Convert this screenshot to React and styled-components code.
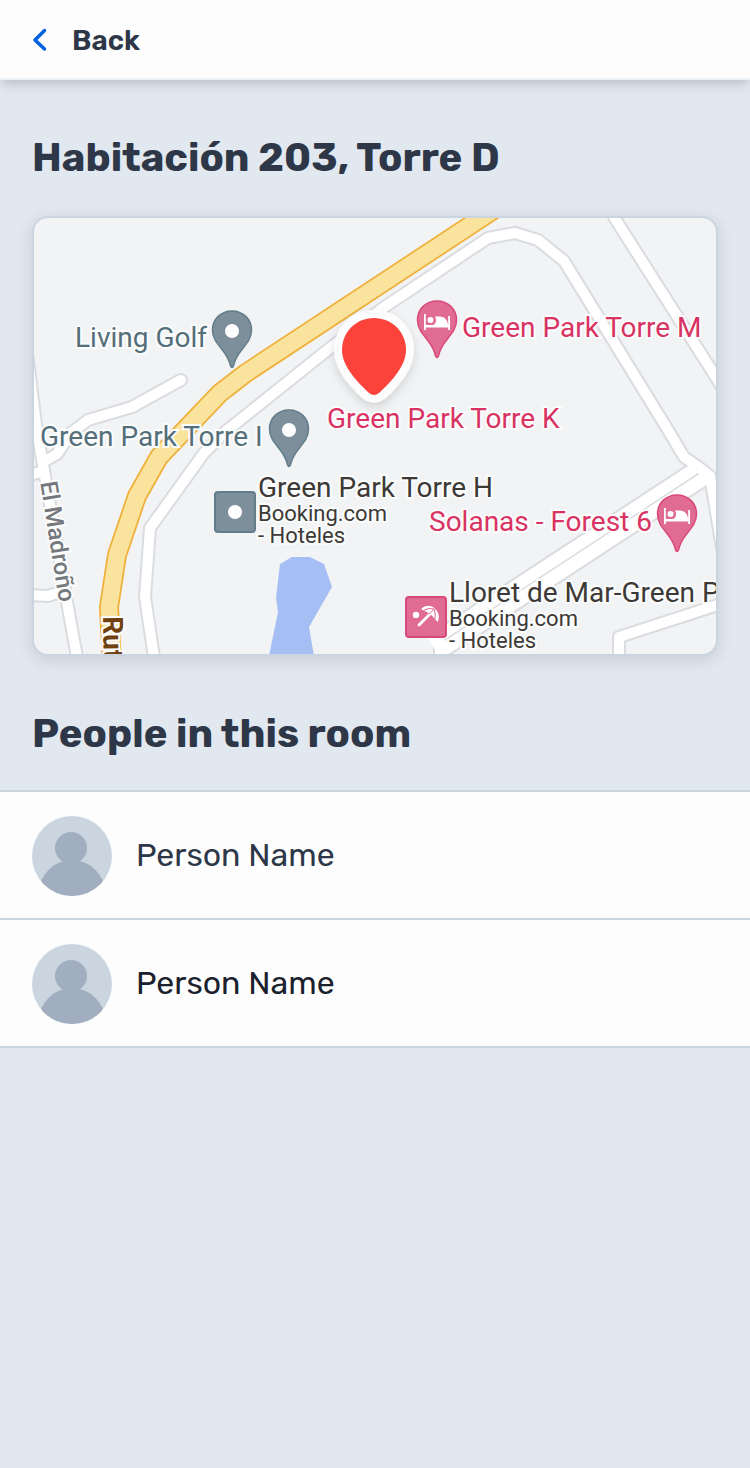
import React from "react";
import styled, { createGlobalStyle } from "styled-components";

const GlobalStyle = createGlobalStyle`
  * { box-sizing: border-box; }
  body {
    margin: 0;
    background: #e2e8f0;
    color: #2d3748;
    font-family: Rubik, Inter, "Liberation Sans", sans-serif;
  }
`;

const Page = styled.div`
  display: flex;
  flex-direction: column;
  min-height: 100vh;
`;

const Header = styled.header`
  display: flex;
  align-items: center;
  height: 80px;
  padding: 0 32px;
  background: #fdfdfd;
  border-bottom: 2px solid #edf2f7;
  box-shadow: 0 8px 12px -2px rgba(0, 0, 0, 0.1), 0 4px 8px -2px rgba(0, 0, 0, 0.08);
`;

const BackButton = styled.button`
  display: flex;
  align-items: center;
  gap: 24px;
  padding: 2px 0 0;
  border: 0;
  background: none;
  color: inherit;
  font-family: inherit;
  font-size: 28px;
  font-weight: 600;
  line-height: 34px;
  cursor: pointer;
`;

const BackLabel = styled.span`
  padding-top: 2px;
`;

const Heading = styled.h2`
  margin: 0;
  padding: 54px 32px 32px;
  font-size: 40px;
  font-weight: 700;
  line-height: 48px;
`;

const MapCard = styled.section`
  position: relative;
  height: 440px;
  margin: 2px 32px 0;
  overflow: hidden;
  border: 2px solid #cbd5e0;
  border-radius: 16px;
  background: #f1f3f5;
  box-shadow: 0 4px 16px rgba(26, 32, 60, 0.14);
`;

const MapDrawing = styled.svg`
  display: block;
`;

const labelColors = {
  place: "#546e7a",
  hotel: "#d93363",
  listing: "#3c3936",
};

const MapLabel = styled.div`
  position: absolute;
  left: ${(p) => p.$x}px;
  top: ${(p) => p.$y}px;
  color: ${(p) => labelColors[p.$kind]};
  font-family: Roboto, sans-serif;
  font-size: 28px;
  line-height: 30px;
  white-space: nowrap;
  -webkit-text-stroke: 4px #fbfcfc;
  paint-order: stroke fill;
`;

const MapNote = styled.div`
  font-size: 22px;
  line-height: 22px;
`;

const StreetLabel = styled.div`
  position: absolute;
  left: ${(p) => p.$x}px;
  top: ${(p) => p.$y}px;
  color: ${(p) => (p.$major ? "#70400f" : "#75787c")};
  font-family: Roboto, sans-serif;
  font-size: ${(p) => (p.$major ? 28 : 24)}px;
  font-weight: ${(p) => (p.$major ? 700 : 500)};
  line-height: 28px;
  white-space: nowrap;
  transform: rotate(${(p) => p.$angle}deg);
  transform-origin: 0 0;
  -webkit-text-stroke: 4px #fbfcfc;
  paint-order: stroke fill;
`;

const PeopleList = styled.ul`
  margin: 0;
  padding: 0;
  list-style: none;
  border-bottom: 2px solid #cbd5e0;
`;

const PersonRow = styled.li`
  display: flex;
  align-items: center;
  gap: 24px;
  padding: 24px 32px 22px;
  border-top: 2px solid #cbd5e0;
  background: #fdfdfd;
  color: ${(p) => (p.$strong ? "#1a202c" : "#2d3748")};
  font-size: 32px;
  line-height: 40px;
`;

const PersonName = styled.span`
  padding-bottom: 2px;
`;

const Avatar = styled.svg`
  flex: none;
  border-radius: 50%;
  background: #cbd5e0;
`;

const roads = [
  "M28 360L36 425L43 465L67 602L79 668",
  "M43 462L57 454L71 433L88 420L132 407L181 380",
  "M30 475L44 471",
  "M30 595L48 596L63 591",
  "M155 664L145 597L150 528L204 453L225 432L270 396L330 348L383 308L488 238L515 233L538 240L564 261L668 430L684 457L697 466L710 476L722 548",
  "M614 217L724 390",
  "M619 664V637L724 603",
  "M440 604V664",
];
const highway = "M501 205L246 373L220 393L159 457L137 496L117 555L109 607L112 664";
const avenue = "M704 471L434 648";

function Pin({ x, y, hotel }) {
  return (
    <g transform={`translate(${x} ${y})`}>
      <path
        d="M0-19C11-19 19.500-11 19.500 0C19.500 15 4 20 1.500 36Q0 39-1.500 36C-4 20-19.500 15-19.500 0C-19.500-11-11-19 0-19Z"
        fill={hotel ? "#e06b93" : "#7c8f9b"}
        stroke={hotel ? "#d9487a" : "#627d8a"}
        strokeWidth="1.500"
      />
      {hotel ? (
        <g fill="#fff">
          <path d="M-13-6H-11.200V5H11.200V-4H13V10H11.200V7.500H-11.200V10H-13Z" />
          <circle cx="-6.500" cy="0" r="3" />
          <path d="M-2-3.500H3C7-3.500 11 0 11 5H-3.500Q1 2-2-3.500Z" />
        </g>
      ) : (
        <circle cy="1" r="7" fill="#fff" />
      )}
    </g>
  );
}

function RoomMap() {
  return (
    <MapCard aria-label="Map">
      <MapDrawing width="100%" height="436" viewBox="34 218 682 436" preserveAspectRatio="xMinYMin slice" aria-hidden="true">
        <defs>
          <filter id="lift" x="-50%" y="-50%" width="200%" height="200%">
            <feDropShadow dx="0" dy="4" stdDeviation="5" floodOpacity="0.14" />
          </filter>
        </defs>
        <path d="M280 564L292 557H310L324 564L332 587L309 627L314 656H269L278 612L276 598Z" fill="#a5bff5" />
        <g fill="none" strokeLinejoin="round" strokeLinecap="round">
          <g stroke="#dadce0" strokeWidth="14">
            {roads.map((d) => <path key={d} d={d} />)}
            <path d={avenue} strokeWidth="30" strokeLinecap="butt" />
          </g>
          <g stroke="#fff" strokeWidth="10">
            {roads.map((d) => <path key={d} d={d} />)}
            <path d={avenue} strokeWidth="26" strokeLinecap="butt" />
          </g>
          <path d="M698 474L445 640" stroke="#dadce0" strokeWidth="1.500" />
          <path d={highway} stroke="#efb03c" strokeWidth="20" />
          <path d={highway} stroke="#fae39c" strokeWidth="16.500" />
        </g>
        <Pin x={232} y={330} />
        <Pin x={289} y={429} />
        <Pin x={437} y={320} hotel />
        <Pin x={677} y={514} hotel />
        <rect x="215" y="492" width="40" height="40" rx="3" fill="#7c8f9b" stroke="#627d8a" strokeWidth="2" />
        <circle cx="235" cy="512" r="7" fill="#fff" />
        <rect x="406" y="597" width="40" height="40" rx="3" fill="#e06b93" stroke="#d9487a" strokeWidth="2" />
        <g transform="translate(426 617)">
          <circle cx="-10" cy="-2" r="3.200" fill="#fff" />
          <path d="M-7 8L5-4" stroke="#fff" strokeWidth="2.800" strokeLinecap="round" />
          <path d="M-5-8C0-12.500 6-12 9-8C13-5 14 1 11.500 5L4.500-3Z" fill="#fff" />
          <path d="M-2-7Q3-9.500 8-8L3-2.500M8-8Q10-3 9 2.500" stroke="#e06b93" strokeWidth="1" fill="none" />
        </g>
        <path
          d="M374 310C396 310 414 327 414 350C414 368 400 385 386 398Q374 407 362 398C348 385 334 368 334 350C334 327 352 310 374 310Z"
          fill="#fcfcfc"
          filter="url(#lift)"
        />
        <path
          d="M374 318C392 318 406 332 406 350C406 365 393 380 379 393Q374 397 369 393C355 380 342 365 342 350C342 332 356 318 374 318Z"
          fill="#fb433c"
        />
      </MapDrawing>
      <MapLabel $kind="place" $x={41} $y={105}>Living Golf</MapLabel>
      <MapLabel $kind="place" $x={6} $y={204}>Green Park Torre I</MapLabel>
      <MapLabel $kind="hotel" $x={293} $y={186}>Green Park Torre K</MapLabel>
      <MapLabel $kind="hotel" $x={428} $y={95}>Green Park Torre M</MapLabel>
      <MapLabel $kind="hotel" $x={395} $y={289}>Solanas - Forest 6</MapLabel>
      <MapLabel $kind="listing" $x={224} $y={255}>
        Green Park Torre H
        <MapNote>Booking.com</MapNote>
        <MapNote>- Hoteles</MapNote>
      </MapLabel>
      <MapLabel $kind="listing" $x={415} $y={360}>
        Lloret de Mar-Green P
        <MapNote>Booking.com</MapNote>
        <MapNote>- Hoteles</MapNote>
      </MapLabel>
      <StreetLabel $x={28} $y={261} $angle={81}>El Madroño</StreetLabel>
      <StreetLabel $major $x={92} $y={398} $angle={89}>Rut</StreetLabel>
    </MapCard>
  );
}

function Person({ name, strong }) {
  return (
    <PersonRow $strong={strong}>
      <Avatar width="80" height="80" viewBox="0 0 80 80" fill="#a0aec0" aria-hidden="true">
        <circle cx="39" cy="32" r="16" />
        <circle cx="40" cy="77" r="33" />
      </Avatar>
      <PersonName>{name}</PersonName>
    </PersonRow>
  );
}

export default function App() {
  return (
    <Page>
      <GlobalStyle />
      <Header>
        <BackButton type="button">
          <svg width="16" height="24" viewBox="0 0 16 24" fill="none" stroke="#0062e0" strokeWidth="3.500" strokeLinejoin="round" strokeLinecap="round" aria-hidden="true">
            <path d="M12.500 2.500L3 12L12.500 21" />
          </svg>
          <BackLabel>Back</BackLabel>
        </BackButton>
      </Header>
      <main>
        <Heading as="h1">Habitación 203, Torre D</Heading>
        <RoomMap />
        <Heading>People in this room</Heading>
        <PeopleList>
          <Person name="Person Name" />
          <Person name="Person Name" strong />
        </PeopleList>
      </main>
    </Page>
  );
}
